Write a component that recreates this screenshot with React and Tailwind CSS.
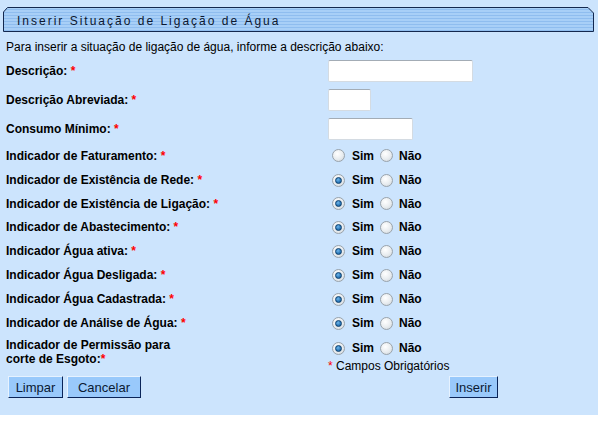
const rows = [
  { label: "Indicador de Faturamento:", sim: false, h: "h-[25px]" },
  { label: "Indicador de Existência de Rede:", sim: true, h: "h-[24px]" },
  { label: "Indicador de Existência de Ligação:", sim: true, h: "h-[23px]" },
  { label: "Indicador de Abastecimento:", sim: true, h: "h-[24px]" },
  { label: "Indicador Água ativa:", sim: true, h: "h-[24px]" },
  { label: "Indicador Água Desligada:", sim: true, h: "h-[24px]" },
  { label: "Indicador Água Cadastrada:", sim: true, h: "h-[24px]" },
  { label: "Indicador de Análise de Água:", sim: true, h: "h-[24px]" },
];

function Radio({ on }) {
  return (
    <span className="relative inline-flex h-[13px] w-[13px] items-center justify-center rounded-full border border-[#9aa3ab] bg-[radial-gradient(circle_at_40%_35%,#ffffff_0%,#e8ecef_55%,#c9d0d6_100%)]">
      {on && (
        <span className="h-[7px] w-[7px] rounded-full border border-[#0b3f6e] bg-[radial-gradient(circle_at_40%_35%,#6fb6ea_0%,#2a77b8_60%,#124d84_100%)]" />
      )}
    </span>
  );
}

function SimNao({ sim }) {
  return (
    <div className="flex h-[14px] items-center pl-[4px] font-bold">
      <Radio on={sim} />
      <span className="ml-[7px] mr-[6px]">Sim</span>
      <Radio on={false} />
      <span className="ml-[6px]">Não</span>
    </div>
  );
}

function Req() {
  return <span className="text-[#ff0000]"> *</span>;
}

function Input({ w }) {
  return (
    <div className={`${w} h-[22px] rounded-[2px] border border-[#d4dbe2] border-t-[#a3acb5] bg-white`} />
  );
}

function Btn({ children, w }) {
  return (
    <button className={`${w} h-[22px] border border-t-[#e6f2ff] border-l-[#e6f2ff] border-b-[#0a2458] border-r-[#0a2458] bg-[#99c9fb] text-[13px] text-[#0a1a33] leading-none`}>
      {children}
    </button>
  );
}

export default function App() {
  return (
    <div className="h-[421px] w-[611px] bg-white font-['Liberation_Sans',Arial,sans-serif] text-[12px] text-black">
      <div className="h-[415px] w-[598px] bg-[#cce4fd] pt-[7px]">
        <div className="relative ml-[3px] h-[25px] w-[591px]">
          <svg className="absolute inset-0" width="591" height="25" viewBox="0 0 591 25">
            <defs>
              <pattern id="st" width="4" height="3" patternUnits="userSpaceOnUse">
                <rect width="4" height="3" fill="#a8cff7" />
                <rect y="2" width="4" height="1" fill="#8fbdef" />
              </pattern>
            </defs>
            <path d="M0.5 24.5 V5 L4.5 0.5 H585 L590.5 6 V24.5 Z" fill="url(#st)" stroke="#13284f" strokeWidth="1" />
          </svg>
          <div className="relative flex h-[25px] items-center pl-[14px] pt-[2px] tracking-[2px] text-[#0b1730]">
            Inserir Situação de Ligação de Água
          </div>
        </div>
        <div className="ml-[6px] mt-[6px] h-[18px] leading-[18px]">
          Para inserir a situação de ligação de água, informe a descrição abaixo:
        </div>
        <div className="ml-[6px]">
          <div className="flex h-[29px] items-center">
            <div className="w-[322px] font-bold">Descrição:<Req /></div>
            <Input w="w-[145px]" />
          </div>
          <div className="flex h-[30px] items-center">
            <div className="w-[322px] font-bold">Descrição Abreviada:<Req /></div>
            <Input w="w-[43px]" />
          </div>
          <div className="flex h-[28px] items-center">
            <div className="w-[322px] font-bold">Consumo Mínimo:<Req /></div>
            <Input w="w-[85px]" />
          </div>
          {rows.map((r) => (
            <div key={r.label} className={`flex ${r.h} items-center`}>
              <div className="w-[322px] font-bold">{r.label}<Req /></div>
              <SimNao sim={r.sim} />
            </div>
          ))}
          <div className="flex pt-[3px]">
            <div className="w-[322px] font-bold leading-[14px]">
              Indicador de Permissão para
              <br />
              corte de Esgoto:<span className="text-[#ff0000]">*</span>
            </div>
            <div className="pt-[3px]">
              <SimNao sim={true} />
              <div className="mt-[4px] leading-[14px]">
                <span className="text-[#ff0000]">*</span> Campos Obrigatórios
              </div>
            </div>
          </div>
        </div>
        <div className="mt-[3px] flex px-[8px]">
          <Btn w="w-[55px]">Limpar</Btn>
          <div className="w-[4px]" />
          <Btn w="w-[74px]">Cancelar</Btn>
          <div className="w-[308px]" />
          <Btn w="w-[49px]">Inserir</Btn>
        </div>
      </div>
    </div>
  );
}
